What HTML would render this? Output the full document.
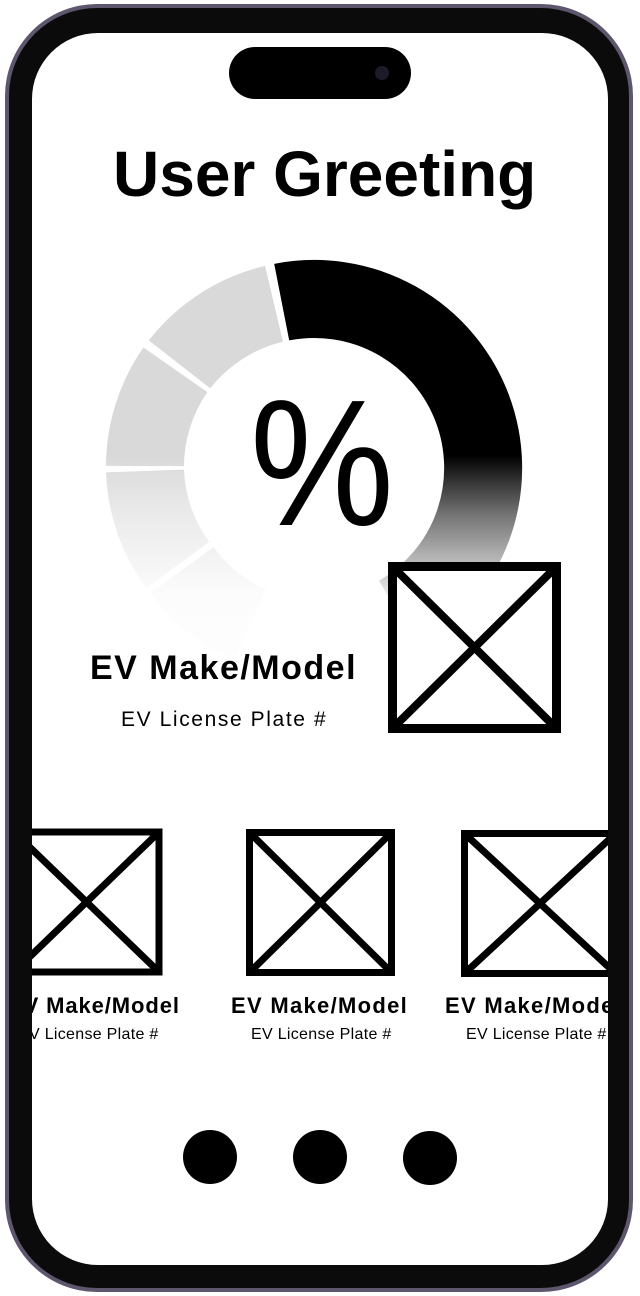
<!DOCTYPE html>
<html><head><meta charset="utf-8"><style>
html,body{margin:0;padding:0;background:#fff;}
body{width:640px;height:1296px;position:relative;overflow:hidden;font-family:"Liberation Sans",sans-serif;}
.frame{position:absolute;left:5px;top:4px;width:628px;height:1288px;border-radius:92px;background:#5d566c;}
.bezel{position:absolute;left:9px;top:8px;width:620px;height:1280px;border-radius:88px;background:#0b0b0c;}
.screen{position:absolute;left:32px;top:33px;width:576px;height:1232px;border-radius:66px;background:#fff;overflow:hidden;}
.island{position:absolute;left:229px;top:47px;width:182px;height:52px;border-radius:26px;background:#000;}
.t{position:absolute;white-space:nowrap;color:#000;}
</style></head><body>
<div class="frame"></div>
<div class="bezel"></div>
<div class="screen">
<svg width="576" height="1232" viewBox="32 33 576 1232" style="position:absolute;left:0;top:0">
<defs>
<linearGradient id="fade" x1="0" y1="455" x2="0" y2="690" gradientUnits="userSpaceOnUse">
<stop offset="0" stop-color="#fff" stop-opacity="0"/>
<stop offset="0.25" stop-color="#fff" stop-opacity="0.45"/>
<stop offset="0.6" stop-color="#fff" stop-opacity="0.93"/>
<stop offset="1" stop-color="#fff" stop-opacity="0.98"/>
</linearGradient>
</defs>
<g fill="none" stroke-width="78">
<path d="M 281.7 302.1 A 169 169 0 0 1 398.5 614.4" stroke="#000"/>
<path d="M 179.5 364.4 A 169 169 0 0 1 274 303.8" stroke="#d9d9d9"/>
<path d="M 145 466 A 169 169 0 0 1 175.4 369.8" stroke="#d9d9d9"/>
<path d="M 177.8 565 A 169 169 0 0 1 145 471" stroke="#d9d9d9"/>
<path d="M 250 625 A 169 169 0 0 1 182 570" stroke="#d9d9d9"/>
</g>
<rect x="73" y="455" width="463" height="235" fill="url(#fade)"/>
<rect x="238" y="455" width="170" height="100" fill="#fff"/>
<rect x="392.5" y="566.5" width="164" height="162" fill="#fff" stroke="#000" stroke-width="9"/>
<path d="M393 567 L556 728 M556 567 L393 728" stroke="#000" stroke-width="8"/>
<g fill="#fff" stroke="#000" stroke-width="7">
<rect x="14" y="832" width="145" height="140"/>
<path d="M14 832 L159 972 M159 832 L14 972"/>
<rect x="249.5" y="832.5" width="142" height="140"/>
<path d="M250 833 L391 972 M391 833 L250 972"/>
<rect x="464.5" y="833.5" width="150" height="140"/>
<path d="M465 834 L615 973 M615 834 L465 973"/>
</g>
<ellipse cx="210" cy="1157" rx="27" ry="27"/>
<ellipse cx="320" cy="1157" rx="27" ry="27"/>
<ellipse cx="430" cy="1158" rx="27" ry="27"/>
</svg>
<div class="t" style="left:81px;top:104px;font-size:64px;font-weight:bold;">User Greeting</div>
<div class="t" style="left:218px;top:327px;font-size:180px;transform:scaleX(0.9);transform-origin:left top;">%</div>
<div class="t" style="left:58px;top:616px;font-size:34px;font-weight:bold;letter-spacing:1.5px;">EV Make/Model</div>
<div class="t" style="left:89px;top:675px;font-size:21px;letter-spacing:1.6px;">EV License Plate #</div>
<div class="t" style="left:-24px;top:960px;font-size:22px;font-weight:bold;letter-spacing:0.9px;">EV Make/Model</div>
<div class="t" style="left:-14px;top:993px;font-size:16px;letter-spacing:0.3px;">EV License Plate #</div>
<div class="t" style="left:199px;top:960px;font-size:22px;font-weight:bold;letter-spacing:1.3px;">EV Make/Model</div>
<div class="t" style="left:219px;top:993px;font-size:16px;letter-spacing:0.3px;">EV License Plate #</div>
<div class="t" style="left:413px;top:960px;font-size:22px;font-weight:bold;letter-spacing:1.3px;">EV Make/Model</div>
<div class="t" style="left:434px;top:993px;font-size:16px;letter-spacing:0.3px;">EV License Plate #</div>
</div>
<div class="island"></div>
<div style="position:absolute;left:375px;top:66px;width:14px;height:14px;border-radius:50%;background:#1b1b2a;"></div>
</body></html>
